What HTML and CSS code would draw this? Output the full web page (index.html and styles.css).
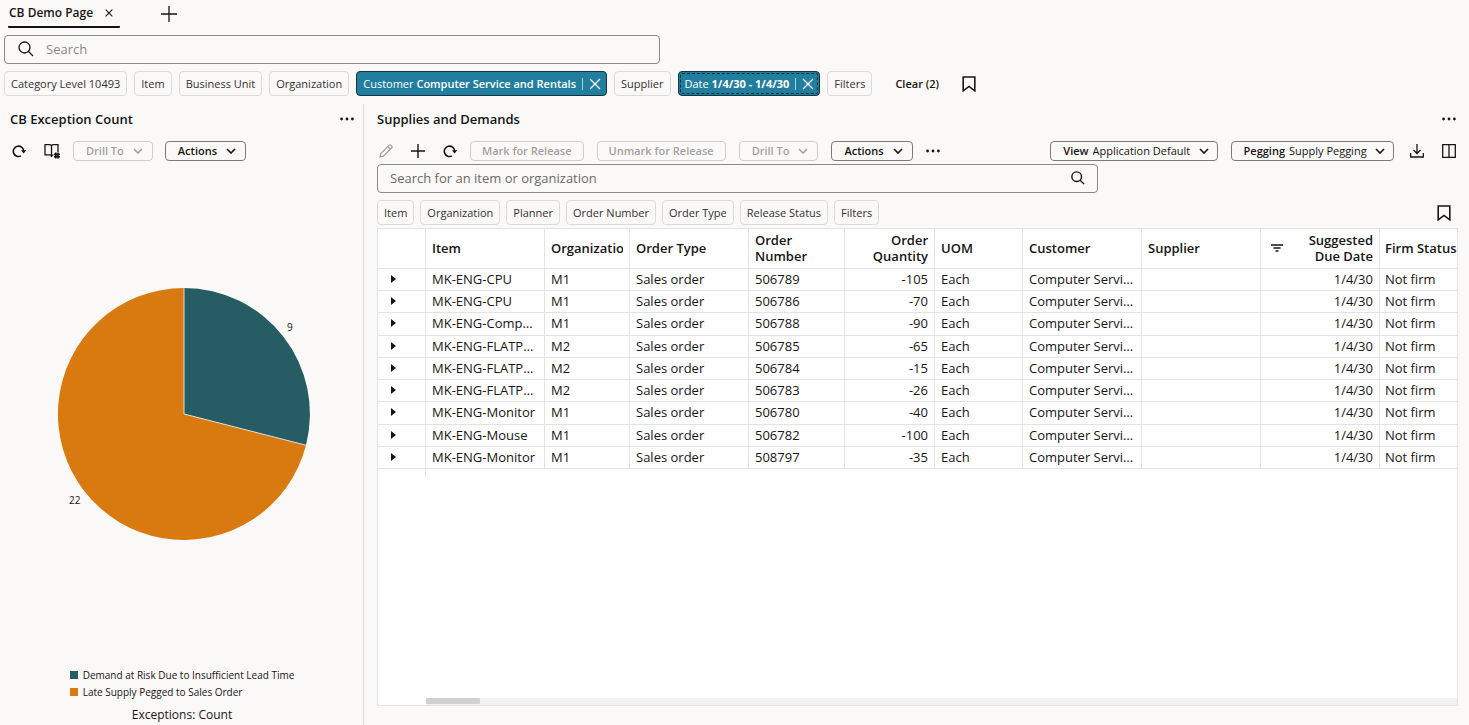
FILE: index.html
```html
<!DOCTYPE html>
<html lang="en">
<head>
    <meta charset="UTF-8">
    <meta name="viewport" content="width=device-width, initial-scale=1.0">
    <title>CB Demo Page</title>
    <link rel="stylesheet" href="styles.css">
</head>
<body>
    <svg class="sprite" aria-hidden="true">
        <symbol id="close" viewBox="0 0 12 12"><path d="M1 1l10 10M11 1L1 11"/></symbol>
        <symbol id="plus" viewBox="0 0 16 16"><path d="M8 0v16M0 8h16"/></symbol>
        <symbol id="search" viewBox="0 0 16 16"><circle cx="6.5" cy="6.5" r="5.5"/><path d="M10.5 10.5L15 15"/></symbol>
        <symbol id="chevron" viewBox="0 0 10 6"><path d="M1 1l4 4 4-4"/></symbol>
        <symbol id="dots" viewBox="0 0 14 4"><g fill="currentColor" stroke="none"><circle cx="1.6" cy="2" r="1.4"/><circle cx="7" cy="2" r="1.4"/><circle cx="12.4" cy="2" r="1.4"/></g></symbol>
        <symbol id="refresh" viewBox="0 0 14 14"><path d="M9 11.9A5.2 5.2 0 1 1 11.7 7"/><path d="M9 6.2h5.2l-2.6 3.2z" fill="currentColor" stroke="none"/></symbol>
        <symbol id="bookmark" viewBox="0 0 14 16"><path d="M1.2 1h11.6v13.8L7 10.4l-5.8 4.4z"/></symbol>
    </svg>

    <nav class="tabs">
        <div class="tab">
            <a href="#">CB Demo Page</a>
            <button class="icon-btn" aria-label="Close tab"><svg class="bold" width="8" height="8"><use href="#close"/></svg></button>
        </div>
        <button class="icon-btn" aria-label="Add tab"><svg width="16" height="16"><use href="#plus"/></svg></button>
    </nav>

    <div class="search-box page-search">
        <svg width="16" height="16"><use href="#search"/></svg>
        <input type="text" placeholder="Search" aria-label="Search">
    </div>

    <div class="chips page-chips">
        <button class="chip">Category Level 10493</button>
        <button class="chip">Item</button>
        <button class="chip">Business Unit</button>
        <button class="chip">Organization</button>
        <div class="chip selected">
            <button class="chip-text">Customer <b>Computer Service and Rentals</b></button>
            <button class="chip-close" aria-label="Remove Customer"><svg width="12" height="12"><use href="#close"/></svg></button>
        </div>
        <button class="chip">Supplier</button>
        <div class="chip selected focused">
            <button class="chip-text">Date <b class="date">1/4/30 - 1/4/30</b></button>
            <button class="chip-close" aria-label="Remove Date"><svg width="12" height="12"><use href="#close"/></svg></button>
        </div>
        <button class="chip">Filters</button>
        <button class="clear">Clear (2)</button>
        <button class="icon-btn" aria-label="Save search"><svg class="bold" width="14" height="16"><use href="#bookmark"/></svg></button>
    </div>

    <main>
        <section class="panel exceptions">
            <header class="panel-head">
                <h2>CB Exception Count</h2>
                <button class="icon-btn" aria-label="More"><svg width="14" height="4"><use href="#dots"/></svg></button>
            </header>
            <div class="toolbar">
                <button class="icon-btn" aria-label="Refresh"><svg class="bold" width="14" height="14"><use href="#refresh"/></svg></button>
                <button class="icon-btn book" aria-label="Show details">
                    <svg width="16" height="16" viewBox="0 0 16 16"><path d="M7.5 3v11M1 1.6h4.5q2 0 2 1.8 0-1.8 2-1.8H14V9M1 1v10.8h4.5q2 0 2 1.8M7.5 13.4q.3-1.4 2-1.6"/><path stroke-width="1.6" d="M11.8 9.5v6M14 9.5v6M10 11.3h6M10 13.6h6"/></svg>
                </button>
                <button class="btn menu" disabled>Drill To <svg width="10" height="6"><use href="#chevron"/></svg></button>
                <button class="btn menu">Actions <svg width="10" height="6"><use href="#chevron"/></svg></button>
            </div>
            <div class="chart">
                <svg width="270" height="256" viewBox="0 0 270 256" role="img" aria-label="Exceptions: Count">
                    <path class="late" d="M135 128V2a126 126 0 1 0 122 157.200z"/>
                    <path class="risk" d="M135 128V2a126 126 0 0 1 122 157.200z"/>
                    <path class="split" d="M135 2v126l122 31.200"/>
                    <text x="238" y="45">9</text>
                    <text x="20" y="218">22</text>
                </svg>
            </div>
            <ul class="legend">
                <li><span class="swatch teal"></span>Demand at Risk Due to Insufficient Lead Time</li>
                <li><span class="swatch orange"></span>Late Supply Pegged to Sales Order</li>
            </ul>
            <p class="measure">Exceptions: Count</p>
        </section>

        <section class="panel supplies">
            <header class="panel-head">
                <h2>Supplies and Demands</h2>
                <button class="icon-btn" aria-label="More"><svg width="14" height="4"><use href="#dots"/></svg></button>
            </header>
            <div class="toolbar">
                <button class="icon-btn" aria-label="Edit" disabled>
                    <svg width="14" height="14" viewBox="0 0 14 14"><path d="M1 13l.8-3.400L10 1.400q1-1 2 0l.6.6q1 1 0 2L4.400 12.200zM8.800 2.600l2.600 2.600"/></svg>
                </button>
                <button class="icon-btn add" aria-label="Add"><svg class="bold" width="14" height="14"><use href="#plus"/></svg></button>
                <button class="icon-btn" aria-label="Refresh"><svg class="bold" width="14" height="14"><use href="#refresh"/></svg></button>
                <button class="btn" disabled>Mark for Release</button>
                <button class="btn" disabled>Unmark for Release</button>
                <button class="btn menu" disabled>Drill To <svg width="10" height="6"><use href="#chevron"/></svg></button>
                <button class="btn menu">Actions <svg width="10" height="6"><use href="#chevron"/></svg></button>
                <button class="icon-btn" aria-label="More actions"><svg width="14" height="4"><use href="#dots"/></svg></button>
                <div class="btn picker first">
                    <label for="view">View</label>
                    <select id="view"><option>Application Default</option></select>
                    <svg width="10" height="6"><use href="#chevron"/></svg>
                </div>
                <div class="btn picker">
                    <label for="pegging">Pegging</label>
                    <select id="pegging"><option>Supply Pegging</option></select>
                    <svg width="10" height="6"><use href="#chevron"/></svg>
                </div>
                <button class="icon-btn export" aria-label="Export">
                    <svg width="14" height="14" viewBox="0 0 14 14"><path d="M7 0v9.500M3.500 6L7 9.500 10.500 6M.7 9v4h12.600V9"/></svg>
                </button>
                <button class="icon-btn" aria-label="Columns">
                    <svg width="14" height="14" viewBox="0 0 14 14"><path d="M.7.7h12.600v12.600H.7zM7 .7v12.600"/></svg>
                </button>
            </div>
            <div class="search-box table-search">
                <input type="text" placeholder="Search for an item or organization" aria-label="Search for an item or organization">
                <svg class="bold" width="14" height="14"><use href="#search"/></svg>
            </div>
            <div class="chips table-chips">
                <button class="chip">Item</button>
                <button class="chip">Organization</button>
                <button class="chip">Planner</button>
                <button class="chip">Order Number</button>
                <button class="chip">Order Type</button>
                <button class="chip">Release Status</button>
                <button class="chip">Filters</button>
                <button class="icon-btn" aria-label="Save search"><svg class="bold" width="14" height="16"><use href="#bookmark"/></svg></button>
            </div>
            <div class="grid-box">
                <table>
                    <colgroup>
                        <col class="w-toggle"><col class="w-wide"><col class="w-org"><col class="w-wide"><col class="w-num">
                        <col class="w-qty"><col class="w-uom"><col class="w-wide"><col class="w-wide"><col class="w-wide"><col>
                    </colgroup>
                    <thead>
                        <tr>
                            <th></th>
                            <th>Item</th>
                            <th><div class="clip">Organization</div></th>
                            <th>Order Type</th>
                            <th>Order<br>Number</th>
                            <th class="num">Order<br>Quantity</th>
                            <th>UOM</th>
                            <th>Customer</th>
                            <th>Supplier</th>
                            <th class="num">
                                <div class="filtered">
                                    <svg width="12" height="8" viewBox="0 0 12 8"><path d="M0 1h12M2.500 4h7M4.500 7h3"/></svg>
                                    <span>Suggested<br>Due Date</span>
                                </div>
                            </th>
                            <th>Firm Status</th>
                        </tr>
                    </thead>
                    <tbody id="rows"></tbody>
                    <tfoot><tr><td></td><td colspan="10"></td></tr></tfoot>
                </table>
                <div class="scrollbar"><div class="thumb"></div></div>
            </div>
        </section>
    </main>

    <script>
        const orders = [
            ["MK-ENG-CPU", "M1", "506789", -105],
            ["MK-ENG-CPU", "M1", "506786", -70],
            ["MK-ENG-Comp…", "M1", "506788", -90],
            ["MK-ENG-FLATP…", "M2", "506785", -65],
            ["MK-ENG-FLATP…", "M2", "506784", -15],
            ["MK-ENG-FLATP…", "M2", "506783", -26],
            ["MK-ENG-Monitor", "M1", "506780", -40],
            ["MK-ENG-Mouse", "M1", "506782", -100],
            ["MK-ENG-Monitor", "M1", "508797", -35]
        ];

        document.getElementById("rows").innerHTML = orders.map(([item, org, number, qty]) => `
            <tr>
                <td><button class="expand" aria-label="Expand row"></button></td>
                <td>${item}</td>
                <td>${org}</td>
                <td>Sales order</td>
                <td>${number}</td>
                <td class="num">${qty}</td>
                <td>Each</td>
                <td>Computer Servi…</td>
                <td></td>
                <td class="num">1/4/30</td>
                <td>Not firm</td>
            </tr>`).join("");
    </script>
</body>
</html>
```
FILE: styles.css
```css
* {
    box-sizing: border-box;
}
body {
    display: flex;
    flex-direction: column;
    min-height: 100vh;
    margin: 0;
    background-color: #fbf9f8;
    color: #161513;
    font-family: "Open Sans", "Noto Sans", sans-serif;
    font-size: 13px;
    line-height: 16px;
}
button, input, select {
    font: inherit;
    color: inherit;
    background: none;
    border: none;
    padding: 0;
    margin: 0;
}
button {
    cursor: pointer;
    white-space: nowrap;
}
svg {
    display: block;
    flex: none;
    fill: none;
    stroke: currentColor;
    stroke-width: 1.3;
}
svg.bold {
    stroke-width: 1.6;
}
.sprite {
    position: absolute;
    width: 0;
    height: 0;
}
.icon-btn {
    display: flex;
    align-items: center;
    justify-content: center;
}
.icon-btn:disabled {
    color: #a3a1a0;
}

/* Tabs */
.tabs {
    display: flex;
    align-items: center;
    gap: 41px;
    height: 28px;
    padding-left: 8px;
}
.tab {
    display: flex;
    align-items: center;
    gap: 12px;
    height: 28px;
    padding: 0 7px 1px 1px;
    border-bottom: 2px solid #161513;
    border-radius: 1px;
}
.tab a {
    color: inherit;
    font-size: 12px;
    font-weight: 600;
    text-decoration: none;
}

/* Search boxes */
.search-box {
    display: flex;
    align-items: center;
    height: 29px;
    padding-bottom: 2px;
    border: 1px solid #8b8987;
    border-radius: 4px;
}
.search-box input {
    flex: 1;
    outline: none;
}
.search-box input::placeholder {
    color: #6b6967;
    opacity: 1;
}
.page-search {
    gap: 12px;
    width: 45%;
    max-width: 656px;
    margin: 7px 0 0 4px;
    padding-left: 13px;
}
.page-search input::placeholder {
    color: #8b8987;
}
.table-search {
    width: 67%;
    max-width: 721px;
    padding-left: 12px;
    padding-right: 12px;
}

/* Filter chips */
.chips {
    display: flex;
    align-items: center;
    gap: 7px;
}
.chip {
    height: 25px;
    padding: 0 6px;
    border: 1px solid #dddbda;
    border-radius: 4px;
    font-size: 11px;
    color: #33312f;
}
.chip b {
    font-weight: 600;
}
.chip .date {
    font-weight: 700;
}
.page-chips {
    margin: 7px 0 8px 4px;
}
.selected {
    display: flex;
    align-items: center;
    gap: 6px;
    padding-right: 5px;
    border-color: #17343f;
    background-color: #227e9e;
    color: #fff;
}
.chip-close {
    padding-left: 6px;
    border-left: 1px solid #a9cfdc;
}
.focused {
    outline: 1px dashed #0b2c38;
    outline-offset: -3px;
}
.clear {
    margin: 0 16px;
    font-size: 11px;
    font-weight: 600;
}
.table-chips {
    gap: 6px;
    margin: 7px 0 3px;
}
.table-chips .icon-btn {
    margin: 0 7px 0 auto;
}

/* Panels */
main {
    display: grid;
    grid-template-columns: 364px minmax(0, 1fr);
    flex: 1;
}
.panel {
    display: flex;
    flex-direction: column;
}
.panel-head {
    display: flex;
    align-items: center;
    justify-content: space-between;
    height: 29px;
}
.panel-head h2 {
    margin: 0;
    font-size: 13px;
    font-weight: 600;
}
.exceptions {
    padding: 0 9px 2px 10px;
    border-right: 1px solid #dddbda;
}
.supplies {
    padding: 0 11px 19px 13px;
}
.supplies .panel-head {
    padding-right: 2px;
}
.toolbar {
    display: flex;
    align-items: center;
    gap: 13px;
    height: 31px;
    padding: 7px 2px 3px;
}
.exceptions .toolbar {
    gap: 12px;
}
.book {
    margin: 0 1px 0 6px;
}
.toolbar .add {
    margin: 0 5px;
}
.btn {
    display: flex;
    align-items: center;
    gap: 9px;
    height: 20px;
    padding: 0 11px;
    border: 1px solid #7d7b79;
    border-radius: 4px;
    font-size: 11px;
    font-weight: 600;
}
.btn:disabled {
    border-color: #d0cecc;
    color: #a3a1a0;
}
.btn.menu {
    padding: 0 9px 0 12px;
}
.btn.picker {
    gap: 4px;
    padding: 0 8px 0 12px;
}
.picker.first {
    margin-left: auto;
}
.picker select {
    appearance: none;
    font-weight: 400;
}
.picker svg {
    margin-left: 4px;
    pointer-events: none;
}
.btn svg {
    stroke-width: 1.6;
}
.export {
    margin: 0 5px 0 3px;
}

/* Pie chart */
.chart {
    display: flex;
    flex: 1;
    align-items: center;
    justify-content: center;
    padding: 0 0 2px 3px;
}
.chart svg {
    stroke: none;
}
.chart .risk {
    fill: #265d64;
}
.chart .late {
    fill: #d87a10;
}
.chart .split {
    stroke: #e4dcd0;
    stroke-width: 1;
}
.chart text {
    fill: #161513;
    font-size: 10px;
}
.legend {
    align-self: center;
    margin: 0;
    padding: 0;
    list-style: none;
    font-size: 10px;
}
.legend li {
    display: flex;
    align-items: center;
    gap: 5px;
    height: 17px;
}
.swatch {
    width: 8px;
    height: 8px;
}
.teal {
    background-color: #265d64;
}
.orange {
    background-color: #d87a10;
}
.measure {
    margin: 7px 0 0;
    text-align: center;
    font-size: 12px;
}

/* Orders table */
.grid-box {
    display: flex;
    flex-direction: column;
    flex: 1;
    border: 1px solid #e4e3e2;
    background-color: #fff;
}
table {
    width: 100%;
    table-layout: fixed;
    border-collapse: separate;
    border-spacing: 0;
}
.w-toggle { width: 48px; }
.w-wide { width: 119px; }
.w-org { width: 85px; }
.w-num { width: 96px; }
.w-qty { width: 90px; }
.w-uom { width: 88px; }
th, td {
    padding: 0 6px 2px;
    border-right: 1px solid #e4e3e2;
    border-bottom: 1px solid #e4e3e2;
    text-align: left;
    white-space: nowrap;
    overflow: hidden;
}
th {
    height: 40px;
    font-weight: 600;
}
td {
    height: 22px;
}
tbody tr:nth-child(4n+3) td {
    height: 23px;
}
th:last-child, td:last-child {
    border-right: none;
    padding-left: 5px;
    padding-right: 0;
}
.clip {
    overflow: hidden;
}
.num {
    text-align: right;
}
.filtered {
    display: flex;
    align-items: center;
    justify-content: space-between;
    padding-left: 4px;
}
.expand {
    display: block;
    margin-left: 7px;
    border-left: 5px solid #161513;
    border-top: 4px solid transparent;
    border-bottom: 4px solid transparent;
}
tfoot td {
    height: 8px;
    border-bottom: none;
}
.scrollbar {
    height: 7px;
    margin: auto 0 0 48px;
    background-color: #f2f2f2;
}
.thumb {
    width: 54px;
    height: 6px;
    border-radius: 1px;
    background-color: #d2d1d0;
}
```
